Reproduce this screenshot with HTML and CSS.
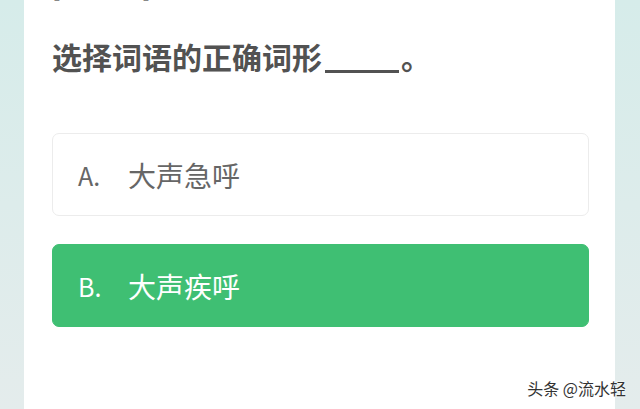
FILE: index.html
```html
<!DOCTYPE html>
<html lang="zh-CN">
<head>
    <meta charset="UTF-8">
    <meta name="viewport" content="width=device-width, initial-scale=1.0">
    <title>单选题</title>
    <link rel="stylesheet" href="styles.css">
</head>
<body>
    <div class="quiz-card">
        <div class="quiz-tag">[ 单选题 ]</div>
        <h1 class="question">选择词语的正确词形<span class="blank"></span>。</h1>
        <ul class="options">
            <li class="option">
                <span class="option-key">A.</span>
                <span class="option-text">大声急呼</span>
            </li>
            <li class="option selected">
                <span class="option-key">B.</span>
                <span class="option-text">大声疾呼</span>
            </li>
        </ul>
    </div>
    <div class="watermark">头条 @流水轻</div>
</body>
</html>
```

FILE: styles.css
```css
/* --- General Setup & Theme --- */
:root {
    --bg-top: #d6ecea;
    --bg-bottom: #e4ecec;
    --card-bg: #ffffff;
    --title-color: #525252;
    --text-color: #666666;
    --border-color: #ececec;
    --green: #3fbf73;
    --font-cjk: "Noto Sans CJK SC", "Noto Sans", sans-serif;
}
html, body {
    height: 100%;
}
body {
    margin: 0;
    overflow: hidden;
    background: linear-gradient(to bottom, var(--bg-top), var(--bg-bottom));
    font-family: var(--font-cjk);
}

/* --- Card --- */
.quiz-card {
    height: 100%;
    margin: 0 25px 0 24px;
    padding: 0 26px 0 28px;
    background-color: var(--card-bg);
    box-sizing: border-box;
    overflow: hidden;
}
.quiz-tag {
    margin-top: -29px;
    font-size: 24px;
    line-height: 32px;
    color: #888;
}
.question {
    margin: 33px 0 0;
    font-size: 30px;
    line-height: 40px;
    font-weight: 700;
    color: var(--title-color);
}
.question .blank {
    display: inline-block;
    width: 74px;
    margin: 0 2px 0 3px;
    border-bottom: 3px solid var(--title-color);
    vertical-align: -4px;
}

/* --- Options --- */
.options {
    list-style: none;
    margin: 57px 0 0;
    padding: 0;
    display: flex;
    flex-direction: column;
    gap: 28px;
}
.option {
    height: 83px;
    display: flex;
    align-items: center;
    padding-left: 25px;
    border: 1px solid var(--border-color);
    border-radius: 7px;
    box-sizing: border-box;
    color: var(--text-color);
    font-size: 28px;
}
.option-key {
    width: 50px;
    font-size: 25px;
}
.option.selected {
    background-color: var(--green);
    border-color: var(--green);
    color: #ffffff;
}

/* --- Watermark --- */
.watermark {
    position: absolute;
    right: 14px;
    bottom: 11px;
    font-size: 16px;
    line-height: 20px;
    color: #333;
    text-shadow: 0 0 2px #fff, 0 0 2px #fff;
}
```
